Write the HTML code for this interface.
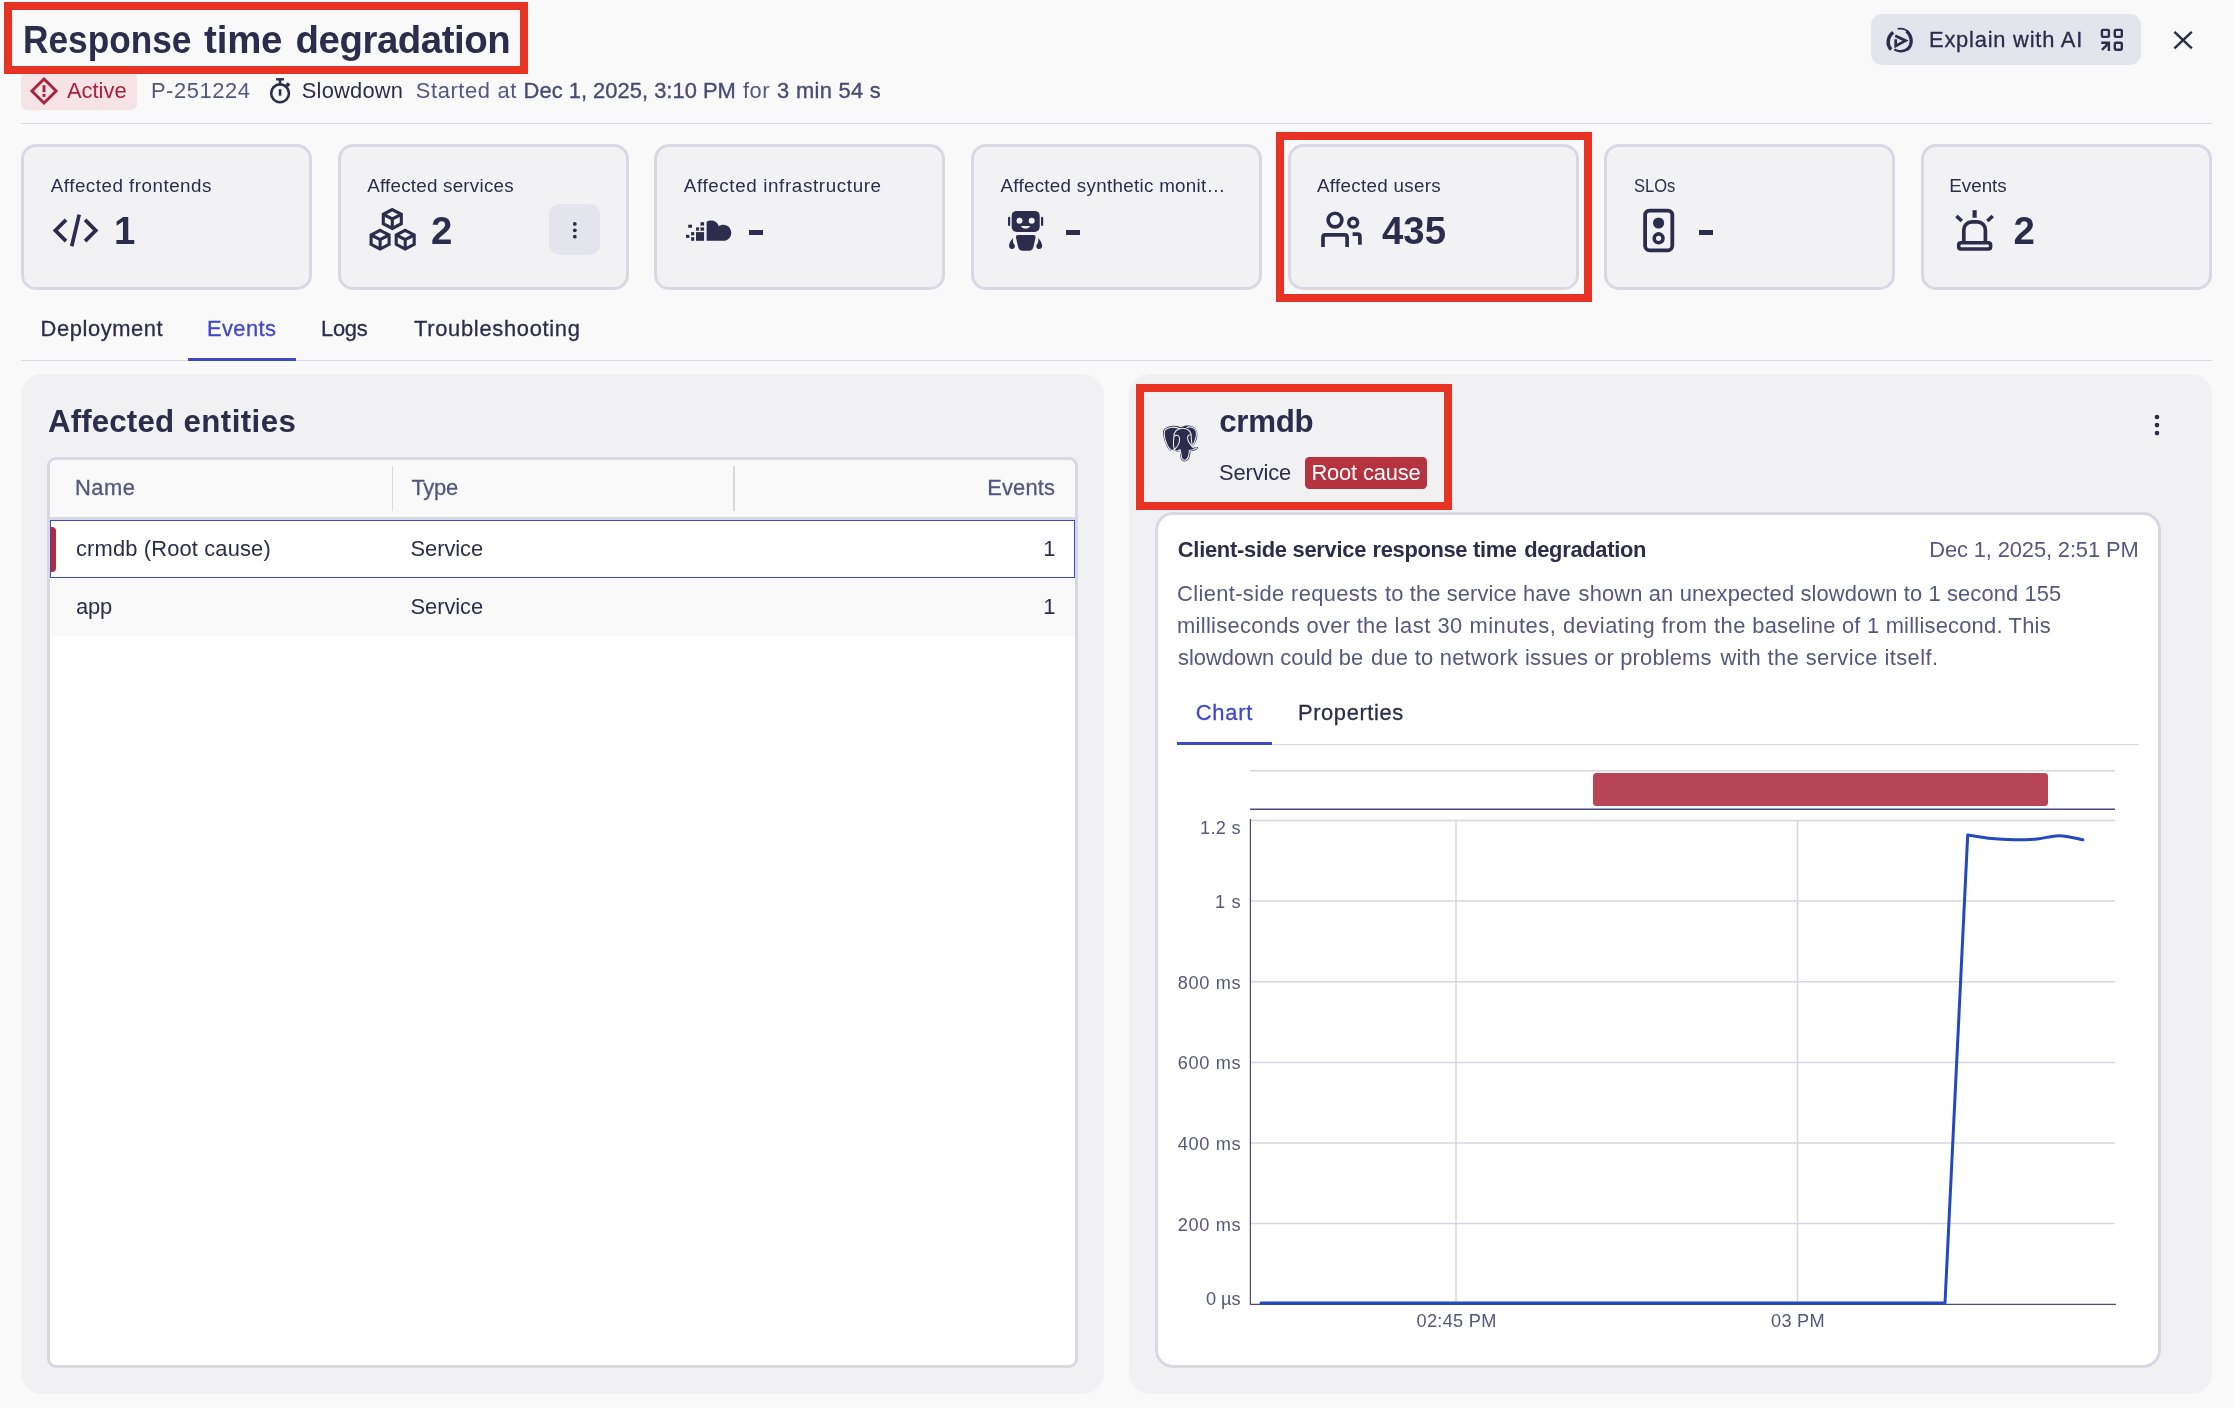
<!DOCTYPE html>
<html lang="en">
<head>
<meta charset="utf-8">
<title>Response time degradation</title>
<style>
html,body{margin:0;padding:0;}
body{width:2234px;height:1408px;overflow:hidden;background:#f9f9fa;position:relative;font-family:"Liberation Sans",sans-serif;color:#2c2c4c;}
.a{position:absolute;box-sizing:border-box;}
.t{position:absolute;white-space:nowrap;display:block;}
.card{position:absolute;box-sizing:border-box;top:144px;width:291px;height:146px;border:3px solid #d8d8e3;border-radius:15px;background:#f2f2f5;}
.hl{position:absolute;box-sizing:border-box;border:8px solid #e73323;}
.panel{position:absolute;box-sizing:border-box;background:#f1f1f4;border-radius:21px;top:374px;height:1020px;}
.dash{position:absolute;background:#2c2c4c;height:4.4px;width:13.6px;top:230.2px;}
svg{position:absolute;overflow:visible;}
header,section,nav,figure{display:block;margin:0;padding:0;}
</style>
</head>
<body>
<!-- header -->
<div class="a" style="left:21px;top:72px;width:116px;height:38px;background:#f5e3e5;border-radius:6px;"></div>
<div class="hl" style="left:4px;top:2px;width:524px;height:72px;"></div>
<div class="a" style="left:21px;top:123px;width:2191px;height:1px;background:#d8d9e3;"></div>
<div class="a" style="left:1871px;top:14px;width:270px;height:51px;background:#e4e5ec;border-radius:11px;"></div>

<!-- cards -->
<div class="card" style="left:21px;"></div>
<div class="card" style="left:338px;"></div>
<div class="card" style="left:654px;"></div>
<div class="card" style="left:971px;"></div>
<div class="card" style="left:1288px;"></div>
<div class="card" style="left:1604px;"></div>
<div class="card" style="left:1921px;"></div>
<div class="hl" style="left:1276px;top:132px;width:316px;height:170px;"></div>
<div class="a" style="left:549px;top:204px;width:51px;height:51px;background:#e4e5ec;border-radius:11px;"></div>
<div class="dash" style="left:749.4px;"></div>
<div class="dash" style="left:1066px;"></div>
<div class="dash" style="left:1699.2px;"></div>

<!-- tabs -->
<div class="a" style="left:21px;top:360px;width:2191px;height:1px;background:#d8d9e3;"></div>
<div class="a" style="left:188px;top:358px;width:108px;height:3px;background:#3f48c8;"></div>

<!-- left panel -->
<div class="panel" style="left:21px;width:1083px;"></div>
<div class="a" style="left:47px;top:457px;width:1031px;height:911px;border:3px solid #d8d8e3;border-radius:9px;background:#ffffff;"></div>
<div class="a" style="left:50px;top:460px;width:1025px;height:57px;background:#f9f9fa;border-radius:6px 6px 0 0;"></div>
<div class="a" style="left:50px;top:517px;width:1025px;height:3px;background:#d8d8e3;"></div>
<div class="a" style="left:391.5px;top:466px;width:1.5px;height:44.5px;background:#d8d8e3;"></div>
<div class="a" style="left:733px;top:466px;width:1.5px;height:44.5px;background:#d8d8e3;"></div>
<div class="a" style="left:50px;top:520px;width:1025px;height:58px;border:1.5px solid #3f48c8;background:#ffffff;"></div>
<div class="a" style="left:50.5px;top:526.5px;width:5.5px;height:45.5px;background:#b8293a;border-radius:0 4px 4px 0;"></div>
<div class="a" style="left:50px;top:578px;width:1025px;height:57.6px;background:#f9f9fa;"></div>

<!-- right panel -->
<div class="panel" style="left:1129px;width:1083px;"></div>
<div class="a" style="left:1305px;top:457px;width:122px;height:32px;background:#b5323f;border-radius:4.5px;"></div>
<div class="hl" style="left:1136px;top:384px;width:316px;height:126px;"></div>
<div class="a" style="left:1155px;top:511.5px;width:1006px;height:856px;border:3px solid #d8d8e3;border-radius:18px;background:#ffffff;"></div>
<div class="a" style="left:1177px;top:744px;width:962px;height:1px;background:#d8d9e3;"></div>
<div class="a" style="left:1177px;top:742px;width:95px;height:3px;background:#3f48c8;"></div>

<!-- chart -->
<svg width="2234" height="1408" style="left:0;top:0" viewBox="0 0 2234 1408">
  <g stroke="#d5d6e1" stroke-width="1.5" fill="none">
    <line x1="1250" y1="770.7" x2="2115" y2="770.7"/>
    <line x1="1251" y1="820.5" x2="2115" y2="820.5"/>
    <line x1="1251" y1="901.1" x2="2115" y2="901.1"/>
    <line x1="1251" y1="981.7" x2="2115" y2="981.7"/>
    <line x1="1251" y1="1062.4" x2="2115" y2="1062.4"/>
    <line x1="1251" y1="1143" x2="2115" y2="1143"/>
    <line x1="1251" y1="1223.6" x2="2115" y2="1223.6"/>
    <line x1="1456" y1="820.5" x2="1456" y2="1304"/>
    <line x1="1797.5" y1="820.5" x2="1797.5" y2="1304"/>
  </g>
  <rect x="1593" y="773" width="455" height="33" rx="3.5" fill="#b94656"/>
  <line x1="1250" y1="809.3" x2="2115" y2="809.3" stroke="#4a4d78" stroke-width="1.6"/>
  <path d="M1250.4 819 V1304.3 H2116" stroke="#4a4d78" stroke-width="1.2" fill="none"/>
  <path d="M1261 1303 H1945 L1967.7 835 C1971.7 835.6 1983.9 837.8 1991.6 838.6 C1999.3 839.4 2006.1 839.7 2013.7 839.8 C2021.3 839.9 2029.8 839.7 2037.4 839.0 C2045.0 838.3 2051.6 835.6 2059.2 835.7 C2066.8 835.8 2078.9 839.1 2082.9 839.8" stroke="#2349c0" stroke-width="3" fill="none" stroke-linejoin="round" stroke-linecap="round"/>
</svg>

<!--ICONS_START-->
<svg width="2234" height="1408" style="left:0;top:0" viewBox="0 0 2234 1408">
<!-- active diamond -->
<g stroke="#a9213a" fill="none" stroke-width="2.9">
  <path d="M44 79 L56.1 91 L44 103 L31.9 91 Z" stroke-linejoin="miter"/>
  <line x1="44" y1="85.2" x2="44" y2="92.2"/>
</g>
<rect x="42.5" y="93.9" width="3" height="3" fill="#a9213a"/>
<!-- stopwatch -->
<g stroke="#2c2c4c" fill="none" stroke-width="2.6">
  <circle cx="280.05" cy="93.3" r="8.9"/>
  <line x1="276.1" y1="79.3" x2="284" y2="79.3" stroke-width="2.4"/>
  <line x1="280.05" y1="80" x2="280.05" y2="84.5"/>
  <line x1="280.05" y1="89.2" x2="280.05" y2="95.7"/>
</g>
<rect x="286" y="82.9" width="3.6" height="3.6" fill="#2c2c4c" transform="rotate(45 287.8 84.7)"/>
<!-- code icon -->
<g stroke="#2c2c4c" fill="none" stroke-width="3.8" stroke-linejoin="miter" stroke-linecap="butt">
  <path d="M66.0 219.9 L55.4 230.5 L66.0 241.1"/>
  <path d="M85.1 219.9 L95.7 230.5 L85.1 241.1"/>
  <line x1="79.2" y1="214.6" x2="71.7" y2="246.2" stroke-width="3.7"/>
</g>
<!-- cubes -->
<g stroke="#2c2c4c" fill="none" stroke-width="3.1" stroke-linejoin="miter">
  <g id="cube">
    <path d="M392.3 209.6 L401.3 214.3 V223.7 L392.3 228.4 L383.3 223.7 V214.3 Z"/>
    <path d="M383.3 214.3 L392.3 218.9 L401.3 214.3 M392.3 218.9 V228.4"/>
  </g>
  <g transform="translate(-12.2 20.7)">
    <path d="M392.3 209.6 L401.3 214.3 V223.7 L392.3 228.4 L383.3 223.7 V214.3 Z"/>
    <path d="M383.3 214.3 L392.3 218.9 L401.3 214.3 M392.3 218.9 V228.4"/>
  </g>
  <g transform="translate(12.9 20.7)">
    <path d="M392.3 209.6 L401.3 214.3 V223.7 L392.3 228.4 L383.3 223.7 V214.3 Z"/>
    <path d="M383.3 214.3 L392.3 218.9 L401.3 214.3 M392.3 218.9 V228.4"/>
  </g>
</g>
<!-- kebab in card -->
<g fill="#2c2c4c">
  <circle cx="574.8" cy="223.9" r="1.9"/><circle cx="574.8" cy="230.3" r="1.9"/><circle cx="574.8" cy="236.7" r="1.9"/>
</g>
<!-- cloud -->
<g fill="#2c2c4c">
  <path d="M706.6 240.8 V221.8 C708 220.9 709.5 220.4 711.2 220.4 C715.2 220.4 717.9 223 718.8 226.2 C720.1 225.2 721.7 224.7 723.3 224.7 C727.7 224.7 731.3 228.3 731.3 232.75 C731.3 237.2 727.7 240.8 723.3 240.8 Z"/>
  <rect x="696" y="232.1" width="8.1" height="8.7"/>
  <rect x="700.5" y="222.2" width="3.6" height="3.4"/>
  <rect x="700.5" y="227.4" width="3.6" height="3.3"/>
  <rect x="696" y="227.4" width="3.1" height="3.3"/>
  <rect x="688.2" y="224.7" width="3.8" height="3.1"/>
  <rect x="691.1" y="232.1" width="3.1" height="3.3"/>
  <rect x="691.1" y="237.2" width="3.1" height="3.6"/>
  <rect x="686" y="234.8" width="3.3" height="3.1"/>
</g>
<!-- robot -->
<g fill="#2c2c4c">
  <rect x="1011.7" y="210.9" width="28" height="21.1" rx="5"/>
  <rect x="1008" y="216.8" width="2.2" height="9.2" rx="1.1"/>
  <rect x="1041" y="216.8" width="2.2" height="9.2" rx="1.1"/>
  <path d="M1017.9 235.1 H1033.6 Q1035.9 235.1 1035.5 237.4 L1033.6 246.5 Q1032.5 250.8 1029 250.8 H1022.6 Q1019.1 250.8 1018 246.5 L1016 237.4 Q1015.6 235.1 1017.9 235.1 Z"/>
  <path d="M1013.2 238 C1012.4 241 1013.2 243 1014.6 245 C1015.6 247 1014 249 1012.2 249 C1010 249 1008.6 247.2 1009.1 245 C1009.7 242.2 1011.2 239.8 1013.2 238 Z"/>
  <path d="M1038 238 C1038.8 241 1038 243 1036.6 245 C1035.6 247 1037.2 249 1039 249 C1041.2 249 1042.6 247.2 1042.1 245 C1041.5 242.2 1040 239.8 1038 238 Z"/>
</g>
<g fill="#f2f2f5">
  <circle cx="1019.5" cy="220.7" r="3"/><circle cx="1031.7" cy="220.7" r="3"/>
  <path d="M1020.8 226 H1030.2 C1029 227.8 1027.4 228.6 1025.5 228.6 C1023.6 228.6 1022 227.8 1020.8 226 Z"/>
</g>
<!-- users -->
<g stroke="#2c2c4c" fill="none" stroke-width="3.7">
  <circle cx="1335" cy="220.1" r="6.85"/>
  <circle cx="1353.2" cy="222.7" r="4.4" stroke-width="3.5"/>
  <path d="M1323 247 V237.4 Q1323 234.9 1325.5 234.9 H1344.6 Q1347.1 234.9 1347.1 237.4 V247"/>
  <path d="M1352.6 234.1 H1357.4 Q1359.9 234.1 1359.9 236.6 V244.7"/>
</g>
<!-- SLO -->
<g stroke="#2c2c4c" fill="none">
  <rect x="1645.1" y="210.6" width="27.2" height="39.7" rx="4.5" stroke-width="3.8"/>
  <circle cx="1658.6" cy="238.3" r="4.4" stroke-width="3.6"/>
</g>
<circle cx="1658.6" cy="223" r="5.6" fill="#2c2c4c"/>
<!-- siren -->
<g stroke="#2c2c4c" fill="none" stroke-width="3.7">
  <line x1="1974.6" y1="210.2" x2="1974.6" y2="217.7" stroke-width="4.2"/>
  <line x1="1956.5" y1="216" x2="1961.8" y2="221"/>
  <line x1="1992.7" y1="216" x2="1987.4" y2="221"/>
  <path d="M1963.8 242 V229.9 a8 8 0 0 1 8 -8 h5.6 a8 8 0 0 1 8 8 V242"/>
  <rect x="1958.7" y="242.8" width="31.9" height="6.2" rx="2.2" stroke-width="3.6"/>
</g>
<!-- AI icon -->
<g stroke="#2c2c4c" fill="none" stroke-linecap="butt">
  <path d="M1893.2 32.4 C1887.2 37 1886.6 45 1891.2 49.4" stroke-width="3.5"/>
  <path d="M1897.7 28.9 C1903 28 1907 30 1909.5 33.5" stroke-width="1.6"/>
  <path d="M1906.5 31 C1913 37 1912.5 46 1906.5 50" stroke-width="3.3"/>
  <path d="M1908 48.5 C1904 52 1898 52 1894.4 49.4" stroke-width="2.4"/>
  <path d="M1895.2 35.8 L1905.6 40.7 L1895.7 46 V39.3" stroke-width="2.7" stroke-linejoin="miter"/>
</g>
<!-- grid icon -->
<g stroke="#2c2c4c" fill="none" stroke-width="2.4">
  <rect x="2101.9" y="29.9" width="7" height="7" rx="1.2"/>
  <rect x="2114.8" y="29.9" width="7" height="7" rx="1.2"/>
  <rect x="2114.8" y="42.8" width="7" height="7" rx="1.2"/>
  <path d="M2101.2 42.8 H2108.9 V51"/>
  <line x1="2102" y1="49.8" x2="2108.4" y2="43.4"/>
</g>
<!-- close X -->
<g stroke="#2c2c4c" fill="none" stroke-width="2.5">
  <line x1="2174.4" y1="31.9" x2="2191.8" y2="48.4"/>
  <line x1="2191.8" y1="31.9" x2="2174.4" y2="48.4"/>
</g>
<!-- kebab right panel -->
<g fill="#2c2c4c">
  <circle cx="2157" cy="417" r="2.3"/><circle cx="2157" cy="425.1" r="2.3"/><circle cx="2157" cy="433.1" r="2.3"/>
</g>
<!-- elephant -->
<g>
  <path d="M1170.5 426.2 C1175 425 1178.5 426.2 1181 427.2 C1185 425.2 1190.5 425 1194 427.2 C1198.5 430.2 1198.2 437 1195.2 442.8 C1194.3 444.6 1193.4 446 1192.6 447.3 C1194.5 447.2 1196.6 446.6 1198.3 447.2 C1197.8 449.6 1194.5 451 1190.6 451 C1190.4 455 1189.6 459.5 1186.5 461 C1183.5 462.5 1180.8 460.4 1180.3 456.5 C1180 454.5 1180.2 452.3 1179.6 451 C1177.5 452.3 1175.2 451.6 1174.4 450.2 C1172.6 451.3 1170.6 451.6 1169 449.6 C1165.6 445.3 1163.2 438 1163 433 C1162.8 429.2 1166 427 1170.5 426.2 Z" fill="#2c2c4c"/>
  <g stroke="#f1f1f4" stroke-width="1.05" fill="none">
    <path d="M1174.5 449.5 C1172.5 451 1170.8 450.6 1169.4 448.6 C1166.5 444.6 1164.3 437.6 1164.2 433.2 C1164.1 430 1166.6 428 1170.6 427.4 C1174.4 426.6 1177.6 427.6 1180.4 428.8"/>
    <path d="M1174.5 449.5 C1176.6 447.6 1178.5 445.5 1179 443 C1179.8 439.8 1180.2 436.8 1178 435.6 C1176.2 434.8 1174 435.6 1173.8 437.4 C1173.4 441 1173.2 446.6 1174.5 449.5 Z"/>
    <path d="M1174 436.5 C1173.6 432.6 1176.6 428.6 1181 428.4 C1186.6 427.4 1191.2 431 1191.2 436 C1191.2 440.4 1192 444 1192.4 447"/>
    <path d="M1186.5 427.6 C1190 426 1194.5 427.2 1196 431 C1197.4 435 1195 441.4 1192.4 446.4"/>
    <path d="M1191 434.4 C1189 434.6 1187.4 436.2 1187.6 438.4 C1187.9 441.8 1190.6 444.8 1192.4 447 C1193.8 448.6 1196 448.2 1197.3 447.8"/>
    <path d="M1175 450.6 C1176.8 451.6 1178.6 450.8 1180 449.6 C1181 452 1181 455.4 1181.6 457.6 C1182.4 460 1184.4 460.8 1186.2 459.8 C1188.8 458.2 1189.2 454 1189.4 450.4 C1191.6 450.2 1194.6 449.6 1196.6 448.4"/>
  </g>
</g>
</svg>

<!--ICONS_END-->

<div class="a" style="left:0;top:0;width:2234px;height:1408px;will-change:transform;">
<header>
<span class="t" style="left:22.96px;top:21.00px;font-size:38.4px;line-height:38.4px;color:#2c2c4c;font-weight:700;transform:scaleX(0.9181);transform-origin:0 0;">Response</span>
<span class="t" style="left:204.10px;top:21.00px;font-size:38.4px;line-height:38.4px;color:#2c2c4c;font-weight:700;letter-spacing:-0.195px;">time</span>
<span class="t" style="left:295.60px;top:21.00px;font-size:38.4px;line-height:38.4px;color:#2c2c4c;font-weight:700;letter-spacing:-0.465px;">degradation</span>
<span class="t" style="left:67.00px;top:80.00px;font-size:21.9px;line-height:21.9px;color:#a9213a;letter-spacing:-0.007px;">Active</span>
<span class="t" style="left:150.90px;top:80.00px;font-size:21.9px;line-height:21.9px;color:#54577f;letter-spacing:0.591px;">P-251224</span>
<span class="t" style="left:301.80px;top:80.00px;font-size:21.9px;line-height:21.9px;color:#2c2c4c;letter-spacing:0.199px;">Slowdown</span>
<span class="t" style="left:415.70px;top:80.00px;font-size:21.9px;line-height:21.9px;color:#54577f;letter-spacing:0.629px;">Started at</span>
<span class="t" style="left:523.60px;top:80.00px;font-size:21.9px;line-height:21.9px;color:#484b74;letter-spacing:0.026px;-webkit-text-stroke:0.35px #484b74;">Dec 1, 2025, 3:10 PM</span>
<span class="t" style="left:742.90px;top:80.00px;font-size:21.9px;line-height:21.9px;color:#54577f;letter-spacing:0.572px;">for</span>
<span class="t" style="left:777.10px;top:80.00px;font-size:21.9px;line-height:21.9px;color:#484b74;letter-spacing:0.295px;-webkit-text-stroke:0.35px #484b74;">3 min 54 s</span>
<span class="t" style="left:1929.00px;top:29.00px;font-size:21.9px;line-height:21.9px;color:#2c2c4c;letter-spacing:0.779px;-webkit-text-stroke:0.3px #2c2c4c;">Explain with AI</span>
</header>
<section aria-label="Summary cards">
<span class="t" style="left:50.80px;top:177.00px;font-size:18.8px;line-height:18.8px;color:#2c2c4c;letter-spacing:0.500px;">Affected frontends</span>
<span class="t" style="left:367.20px;top:177.00px;font-size:18.8px;line-height:18.8px;color:#2c2c4c;letter-spacing:0.233px;">Affected services</span>
<span class="t" style="left:683.75px;top:177.00px;font-size:18.8px;line-height:18.8px;color:#2c2c4c;letter-spacing:0.632px;">Affected infrastructure</span>
<span class="t" style="left:1000.40px;top:177.00px;font-size:18.8px;line-height:18.8px;color:#2c2c4c;letter-spacing:0.298px;">Affected synthetic monit…</span>
<span class="t" style="left:1317.00px;top:177.00px;font-size:18.8px;line-height:18.8px;color:#2c2c4c;letter-spacing:0.298px;">Affected users</span>
<span class="t" style="left:1633.50px;top:177.00px;font-size:18.8px;line-height:18.8px;color:#2c2c4c;transform:scaleX(0.8780);transform-origin:0 0;">SLOs</span>
<span class="t" style="left:1949.30px;top:177.00px;font-size:18.8px;line-height:18.8px;color:#2c2c4c;letter-spacing:-0.005px;">Events</span>
<span class="t" style="left:113.95px;top:212.00px;font-size:38.4px;line-height:38.4px;color:#2c2c4c;font-weight:700;">1</span>
<span class="t" style="left:431.00px;top:212.00px;font-size:38.4px;line-height:38.4px;color:#2c2c4c;font-weight:700;">2</span>
<span class="t" style="left:1381.90px;top:212.00px;font-size:38.4px;line-height:38.4px;color:#2c2c4c;font-weight:700;letter-spacing:0.049px;">435</span>
<span class="t" style="left:2013.60px;top:212.00px;font-size:38.4px;line-height:38.4px;color:#2c2c4c;font-weight:700;">2</span>
</section>
<nav aria-label="Tabs">
<span class="t" style="left:40.50px;top:318.00px;font-size:21.9px;line-height:21.9px;color:#2c2c4c;letter-spacing:0.597px;-webkit-text-stroke:0.3px #2c2c4c;">Deployment</span>
<span class="t" style="left:207.00px;top:318.00px;font-size:21.9px;line-height:21.9px;color:#3f48c8;letter-spacing:0.405px;-webkit-text-stroke:0.3px #3f48c8;">Events</span>
<span class="t" style="left:321.00px;top:318.00px;font-size:21.9px;line-height:21.9px;color:#2c2c4c;letter-spacing:-0.241px;-webkit-text-stroke:0.3px #2c2c4c;">Logs</span>
<span class="t" style="left:414.00px;top:318.00px;font-size:21.9px;line-height:21.9px;color:#2c2c4c;letter-spacing:0.693px;-webkit-text-stroke:0.3px #2c2c4c;">Troubleshooting</span>
</nav>
<section aria-label="Affected entities">
<span class="t" style="left:47.90px;top:406.00px;font-size:31.3px;line-height:31.3px;color:#2c2c4c;font-weight:700;letter-spacing:0.145px;">Affected</span>
<span class="t" style="left:183.40px;top:406.00px;font-size:31.3px;line-height:31.3px;color:#2c2c4c;font-weight:700;letter-spacing:0.434px;">entities</span>
<span class="t" style="left:75.00px;top:477.00px;font-size:21.9px;line-height:21.9px;color:#54577f;letter-spacing:0.527px;-webkit-text-stroke:0.3px #54577f;">Name</span>
<span class="t" style="left:411.50px;top:477.00px;font-size:21.9px;line-height:21.9px;color:#54577f;letter-spacing:-0.294px;-webkit-text-stroke:0.3px #54577f;">Type</span>
<span class="t" style="left:987.20px;top:477.00px;font-size:21.9px;line-height:21.9px;color:#54577f;letter-spacing:0.165px;-webkit-text-stroke:0.3px #54577f;">Events</span>
<span class="t" style="left:76.00px;top:538.00px;font-size:21.9px;line-height:21.9px;color:#2c2c4c;letter-spacing:0.145px;">crmdb (Root cause)</span>
<span class="t" style="left:410.50px;top:538.00px;font-size:21.9px;line-height:21.9px;color:#2c2c4c;letter-spacing:-0.053px;">Service</span>
<span class="t" style="left:1043.20px;top:538.00px;font-size:21.9px;line-height:21.9px;color:#2c2c4c;">1</span>
<span class="t" style="left:76.00px;top:596.00px;font-size:21.9px;line-height:21.9px;color:#2c2c4c;letter-spacing:-0.175px;">app</span>
<span class="t" style="left:410.50px;top:596.00px;font-size:21.9px;line-height:21.9px;color:#2c2c4c;letter-spacing:-0.053px;">Service</span>
<span class="t" style="left:1043.20px;top:596.00px;font-size:21.9px;line-height:21.9px;color:#2c2c4c;">1</span>
</section>
<section aria-label="Entity details">
<span class="t" style="left:1219.20px;top:406.00px;font-size:31.3px;line-height:31.3px;color:#2c2c4c;font-weight:700;letter-spacing:-0.308px;">crmdb</span>
<span class="t" style="left:1219.00px;top:462.00px;font-size:21.9px;line-height:21.9px;color:#2c2c4c;letter-spacing:-0.137px;">Service</span>
<span class="t" style="left:1311.40px;top:462.00px;font-size:21.9px;line-height:21.9px;color:#ffffff;letter-spacing:-0.162px;">Root cause</span>
<span class="t" style="left:1177.80px;top:539.00px;font-size:21.9px;line-height:21.9px;color:#2c2c4c;font-weight:700;letter-spacing:-0.271px;">Client-side service</span>
<span class="t" style="left:1372.50px;top:539.00px;font-size:21.9px;line-height:21.9px;color:#2c2c4c;font-weight:700;letter-spacing:-0.329px;">response time</span>
<span class="t" style="left:1524.20px;top:539.00px;font-size:21.9px;line-height:21.9px;color:#2c2c4c;font-weight:700;letter-spacing:-0.310px;">degradation</span>
<span class="t" style="left:1929.30px;top:539.00px;font-size:21.9px;line-height:21.9px;color:#54577f;letter-spacing:-0.126px;">Dec 1, 2025, 2:51 PM</span>
<span class="t" style="left:1177.00px;top:583.00px;font-size:21.9px;line-height:21.9px;color:#54577f;letter-spacing:0.373px;">Client-side requests</span>
<span class="t" style="left:1385.10px;top:583.00px;font-size:21.9px;line-height:21.9px;color:#54577f;letter-spacing:0.107px;">to the service have</span>
<span class="t" style="left:1578.60px;top:583.00px;font-size:21.9px;line-height:21.9px;color:#54577f;letter-spacing:0.138px;">shown an unexpected</span>
<span class="t" style="left:1800.40px;top:583.00px;font-size:21.9px;line-height:21.9px;color:#54577f;letter-spacing:0.125px;">slowdown to 1 second 155</span>
<span class="t" style="left:1177.00px;top:615.00px;font-size:21.9px;line-height:21.9px;color:#54577f;letter-spacing:0.319px;">milliseconds over the</span>
<span class="t" style="left:1394.60px;top:615.00px;font-size:21.9px;line-height:21.9px;color:#54577f;letter-spacing:0.532px;">last 30 minutes,</span>
<span class="t" style="left:1563.00px;top:615.00px;font-size:21.9px;line-height:21.9px;color:#54577f;letter-spacing:0.492px;">deviating from the</span>
<span class="t" style="left:1752.30px;top:615.00px;font-size:21.9px;line-height:21.9px;color:#54577f;letter-spacing:0.224px;">baseline of 1 millisecond. This</span>
<span class="t" style="left:1178.00px;top:647.00px;font-size:21.9px;line-height:21.9px;color:#54577f;letter-spacing:0.013px;">slowdown could be</span>
<span class="t" style="left:1371.00px;top:647.00px;font-size:21.9px;line-height:21.9px;color:#54577f;letter-spacing:0.258px;">due to network</span>
<span class="t" style="left:1525.00px;top:647.00px;font-size:21.9px;line-height:21.9px;color:#54577f;letter-spacing:0.161px;">issues or problems</span>
<span class="t" style="left:1720.40px;top:647.00px;font-size:21.9px;line-height:21.9px;color:#54577f;letter-spacing:0.419px;">with the service itself.</span>
<span class="t" style="left:1195.80px;top:702.00px;font-size:21.9px;line-height:21.9px;color:#3f48c8;letter-spacing:0.738px;-webkit-text-stroke:0.3px #3f48c8;">Chart</span>
<span class="t" style="left:1298.00px;top:702.00px;font-size:21.9px;line-height:21.9px;color:#2c2c4c;letter-spacing:0.597px;-webkit-text-stroke:0.3px #2c2c4c;">Properties</span>
</section>
<figure aria-label="Response time chart">
<span class="t" style="left:1200.00px;top:819.00px;font-size:18.2px;line-height:18.2px;color:#54577f;letter-spacing:0.266px;">1.2 s</span>
<span class="t" style="left:1215.03px;top:893.00px;font-size:18.2px;line-height:18.2px;color:#54577f;letter-spacing:0.600px;">1 s</span>
<span class="t" style="left:1177.85px;top:974.00px;font-size:18.2px;line-height:18.2px;color:#54577f;letter-spacing:0.600px;">800 ms</span>
<span class="t" style="left:1177.85px;top:1054.00px;font-size:18.2px;line-height:18.2px;color:#54577f;letter-spacing:0.600px;">600 ms</span>
<span class="t" style="left:1177.85px;top:1135.00px;font-size:18.2px;line-height:18.2px;color:#54577f;letter-spacing:0.600px;">400 ms</span>
<span class="t" style="left:1177.80px;top:1216.00px;font-size:18.2px;line-height:18.2px;color:#54577f;letter-spacing:0.610px;">200 ms</span>
<span class="t" style="left:1205.90px;top:1290.00px;font-size:18.2px;line-height:18.2px;color:#54577f;letter-spacing:-0.049px;">0 µs</span>
<span class="t" style="left:1416.50px;top:1312.00px;font-size:18.2px;line-height:18.2px;color:#54577f;letter-spacing:0.300px;">02:45 PM</span>
<span class="t" style="left:1771.00px;top:1312.00px;font-size:18.2px;line-height:18.2px;color:#54577f;letter-spacing:0.271px;">03 PM</span>
</figure>
</div>
</body>
</html>
